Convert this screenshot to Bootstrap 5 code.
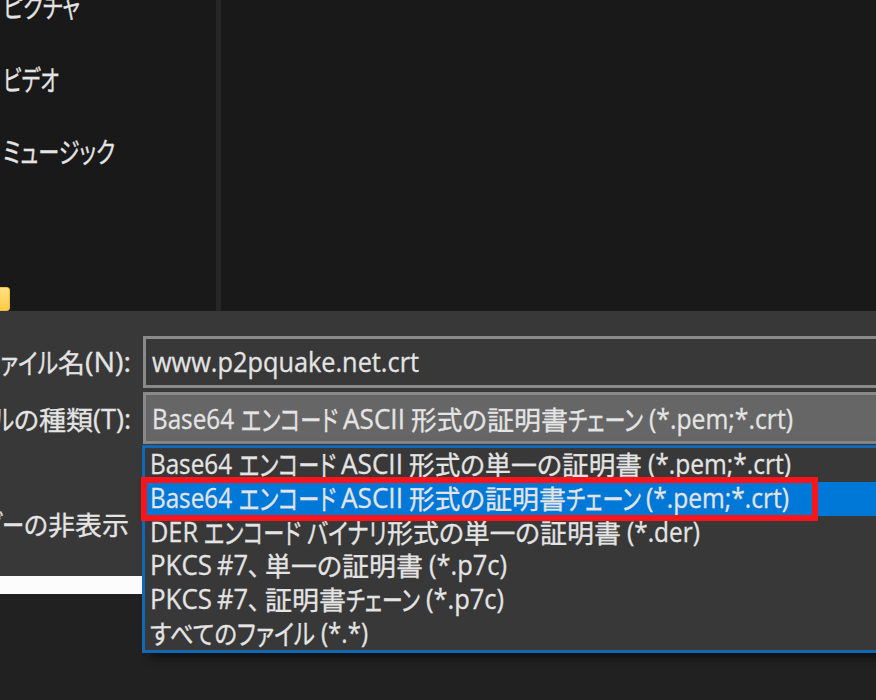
<!DOCTYPE html>
<html lang="ja">
<head>
<meta charset="utf-8">
<meta name="viewport" content="width=device-width, initial-scale=1">
<title>証明書の保存</title>
<link href="https://cdn.jsdelivr.net/npm/bootstrap@5.3.0/dist/css/bootstrap.min.css" rel="stylesheet">
<style>
body{width:876px;height:700px;background:#212121;color:#e4e4e4;font:26.6px/34px "Open Sans","Noto Sans CJK JP",sans-serif;-webkit-text-stroke:.3px #e4e4e4}
.files{height:311px;background:#191919}
.places{width:216px;padding-left:3px}
.places .place{height:72.5px;line-height:72.5px}
.places .place:first-child{margin-top:-30px}
.divider{width:5px;background:#272727}
.folder-tile{left:-16px;top:287px;width:26px;height:24px;border-radius:3px;background:linear-gradient(#ffdf83,#ffcb45);border:1px solid #f3bd37}
.form-area{height:265px;background:#383838;padding-top:25px}
.names{width:143px;padding-right:12px}
.names .line{height:52px;line-height:52px;margin-bottom:5px}
.names .line.toggle{margin-top:53px;padding-right:2px}
.box{height:52px;line-height:46px;border:3px solid #8a8a8a;border-right:0;padding-left:6px}
.box.choice{background:#666;margin-top:4px;line-height:48px}
.strip{width:143px;height:18px;background:#fcfcfc}
.options{left:142px;top:445px;width:734px;height:208px;border:3px solid #1168b4;border-right:0;background:#383838;box-shadow:8px 5px 8px #111}
.options .opt{height:33.8px;line-height:32px;padding-left:5px}
.options .opt.chosen{background:#0078d7}
.frame{left:141px;top:477px;width:677px;height:44px;border:6px solid #fb151b}
.seg{display:inline-block;flex:none;white-space:pre}
.seg>span{display:inline-block;transform-origin:0 50%}
.seg.jp{font-family:"Noto Sans CJK JP",sans-serif;font-feature-settings:"palt"}
</style>
<script src="https://cdn.jsdelivr.net/npm/bootstrap@5.3.0/dist/js/bootstrap.bundle.min.js"></script>
</head>
<body class="position-relative overflow-hidden m-0">
<div class="files d-flex overflow-hidden">
  <div class="places">
    <div class="place d-flex" data-run="ピクチャ:77"></div>
    <div class="place d-flex" data-run="ビデオ:56"></div>
    <div class="place d-flex" data-run="ミュージック:112"></div>
  </div>
  <div class="divider"></div>
</div>
<div class="folder-tile position-absolute"></div>
<div class="form-area d-flex">
  <div class="names overflow-hidden">
    <div class="line d-flex justify-content-end" data-run="ファイル:76|名:27|(N)\::46"></div>
    <div class="line d-flex justify-content-end" data-run="ファイル:76|の:25|種類:54|(T)\::38"></div>
    <div class="line toggle d-flex justify-content-end" data-run="フォルダー:99|の:24|非表示:81"></div>
  </div>
  <div class="flex-grow-1">
    <div class="box d-flex" data-run="www.p2pquake.net.crt:267"></div>
    <div class="box choice d-flex" data-run="Base64:82:7|エンコード:97:5|ASCII:62:6|形式の:76|証明書:81|チェーン:75:6|(*.pem;*.crt):144"></div>
  </div>
</div>
<div class="strip"></div>
<div class="options position-absolute">
  <div class="opt d-flex" data-run="Base64:82:7|エンコード:97:5|ASCII:62:6|形式の:76|単一の:77|証明書:80:6|(*.pem;*.crt):143"></div>
  <div class="opt chosen d-flex" data-run="Base64:82:7|エンコード:97:5|ASCII:62:6|形式の:76|証明書:81|チェーン:75:5|(*.pem;*.crt):143"></div>
  <div class="opt d-flex" data-run="DER:48:6|エンコード:97:6|バイナリ:80|形式の:77|単一の:76|証明書:81:6|(*.der):73"></div>
  <div class="opt d-flex" data-run="PKCS:62:5|#7:31|、:12:5|単一の:77|証明書:81:6|(*.p7c):78"></div>
  <div class="opt d-flex" data-run="PKCS:62:5|#7:31|、:12:5|証明書:81|チェーン:74:6|(*.p7c):78"></div>
  <div class="opt d-flex" data-run="すべての:87|ファイル:78:6|(*.*):47"></div>
</div>
<div class="frame position-absolute"></div>
<script>
// Each run is text:width:gap, fitted to the dialog font's narrower metrics.
document.querySelectorAll('[data-run]').forEach(line => {
  line.dataset.run.split('|').forEach(part => {
    const [text, width, gap] = part.replace('\\:', '\u0001').split(':');
    const seg = document.createElement('div'), ink = document.createElement('span');
    const kana = /^[\u30a0-\u30ff]+$/.test(text);
    seg.className = 'seg' + (/[\u3000-\u9fff]/.test(text) ? ' jp' : '');
    ink.textContent = text.replace('\u0001', ':');
    seg.append(ink);
    line.append(seg);
    const natural = ink.getBoundingClientRect().width;
    seg.style.width = width + 'px';
    seg.style.marginRight = (gap || 0) + 'px';
    ink.style.transform = `scale(${width / natural}, ${kana ? 1.07 : 1})`;
  });
});
</script>
</body>
</html>
